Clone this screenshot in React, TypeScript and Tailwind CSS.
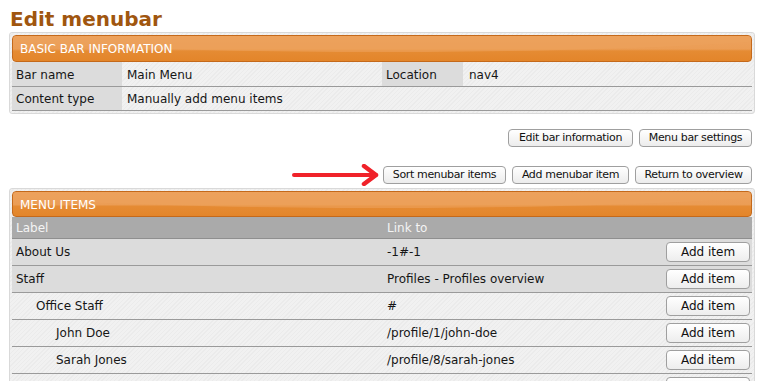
import React from "react";

const hatch =
  "bg-[repeating-linear-gradient(135deg,#f1f1f1_0px,#f1f1f1_2px,#ebebeb_2px,#ebebeb_3px)]";

function OrangeHeader({ title, h }: { title: string; h: string }) {
  return (
    <div className={"relative rounded-[4px] border border-[#c4691b] overflow-hidden bg-[linear-gradient(180deg,#eda25e_0%,#eb9d55_52%,#e58b33_60%,#e3852a_100%)] " + h}>
      <div className="absolute left-[-10%] top-[-30px] w-[120%] h-[46px] rounded-[50%] bg-[#eda15b] opacity-60" />
      <div className="relative pl-[7px] pt-[1px] leading-[24px] text-[12px] text-white uppercase">{title}</div>
    </div>
  );
}

function Btn({ children, className = "" }: { children: React.ReactNode; className?: string }) {
  return (
    <button
      className={
        "h-[18px] px-[8px] border border-[#9f9f9f] rounded-[4px] bg-[linear-gradient(180deg,#ffffff,#ececec)] text-[11px] tracking-[-0.35px] leading-[16px] text-[#111] whitespace-nowrap " +
        className
      }
    >
      {children}
    </button>
  );
}

const items = [
  { label: "About Us", link: "-1#-1", indent: 0, gray: true },
  { label: "Staff", link: "Profiles - Profiles overview", indent: 0, gray: true },
  { label: "Office Staff", link: "#", indent: 20, gray: false },
  { label: "John Doe", link: "/profile/1/john-doe", indent: 40, gray: false },
  { label: "Sarah Jones", link: "/profile/8/sarah-jones", indent: 40, gray: false },
  { label: "", link: "", indent: 0, gray: false },
];

export default function App() {
  return (
    <div className="w-[758px] h-[381px] overflow-hidden bg-white font-['DejaVu_Sans',sans-serif] text-[12px] text-[#161616]">
      <div className="pl-[9px] pr-[3px]">
        <h1 className="pt-[7px] pl-[1px] h-[32px] text-[20px] leading-[24px] font-bold text-[#a0560f]">
          Edit menubar
        </h1>

        <div className={"border border-[#d9d9d9] rounded-[3px] p-[2px] " + hatch}>
          <OrangeHeader title="Basic bar information" h="h-[27px]" />
          <div className="flex h-[25px] border-b border-[#9a9a9a]">
            <div className="w-[110px] bg-[#dcdcdc] pl-[4px] pt-[2px] flex items-center">Bar name</div>
            <div className="w-[260px] pl-[5px] pt-[2px] flex items-center">Main Menu</div>
            <div className="w-[81px] bg-[#dcdcdc] pl-[4px] pt-[2px] flex items-center">Location</div>
            <div className="flex-1 pl-[6px] pt-[2px] flex items-center">nav4</div>
          </div>
          <div className="flex h-[24px] border-b border-[#9a9a9a]">
            <div className="w-[110px] bg-[#dcdcdc] pl-[4px] pt-[1px] flex items-center">Content type</div>
            <div className="flex-1 pl-[5px] pt-[1px] flex items-center">Manually add menu items</div>
          </div>
        </div>

        <div className="mt-[15px] pr-[3px] flex justify-end gap-[6px]">
          <Btn className="w-[125px]">Edit bar information</Btn>
          <Btn className="w-[113px]">Menu bar settings</Btn>
        </div>

        <div className="mt-[17px] pr-[3px] flex justify-end items-center gap-[6px]">
          <svg width="88" height="22" viewBox="0 0 88 22" className="mr-[-3px]">
            <path d="M2 11 L84 11" stroke="#f0222a" strokeWidth="4" strokeLinecap="round" fill="none" />
            <path d="M72 2 L84 11 L72 20" stroke="#f0222a" strokeWidth="4.5" strokeLinecap="round" strokeLinejoin="round" fill="none" />
          </svg>
          <Btn className="w-[123px]">Sort menubar items</Btn>
          <Btn className="w-[117px]">Add menubar item</Btn>
          <Btn className="w-[117px]">Return to overview</Btn>
        </div>

        <div className={"mt-[2px] border border-[#d9d9d9] rounded-[3px] p-[2px] " + hatch}>
          <OrangeHeader title="Menu items" h="h-[26px]" />
          <div className="flex h-[22px] bg-[#aaaaaa] text-[#f4f4f4] border-b border-[#8f8f8f]">
            <div className="w-[370px] pl-[4px] flex items-center">Label</div>
            <div className="flex-1 pl-[5px] flex items-center">Link to</div>
          </div>
          {items.map((it, i) => (
            <div
              key={i}
              className={"flex h-[27px] border-b border-[#9a9a9a] " + (it.gray ? "bg-[#dcdcdc]" : "")}
            >
              <div className="w-[370px] pl-[4px] flex items-center">
                <span style={{ paddingLeft: it.indent }}>{it.label}</span>
              </div>
              <div className="flex-1 pl-[5px] flex items-center">{it.link}</div>
              <div className="pr-[2px] flex items-center">
                <button className="w-[84px] h-[20px] border border-[#9f9f9f] rounded-[4px] bg-[linear-gradient(180deg,#ffffff,#ededed)] text-[12px] leading-[18px] text-[#111]">
                  Add item
                </button>
              </div>
            </div>
          ))}
        </div>
      </div>
    </div>
  );
}
